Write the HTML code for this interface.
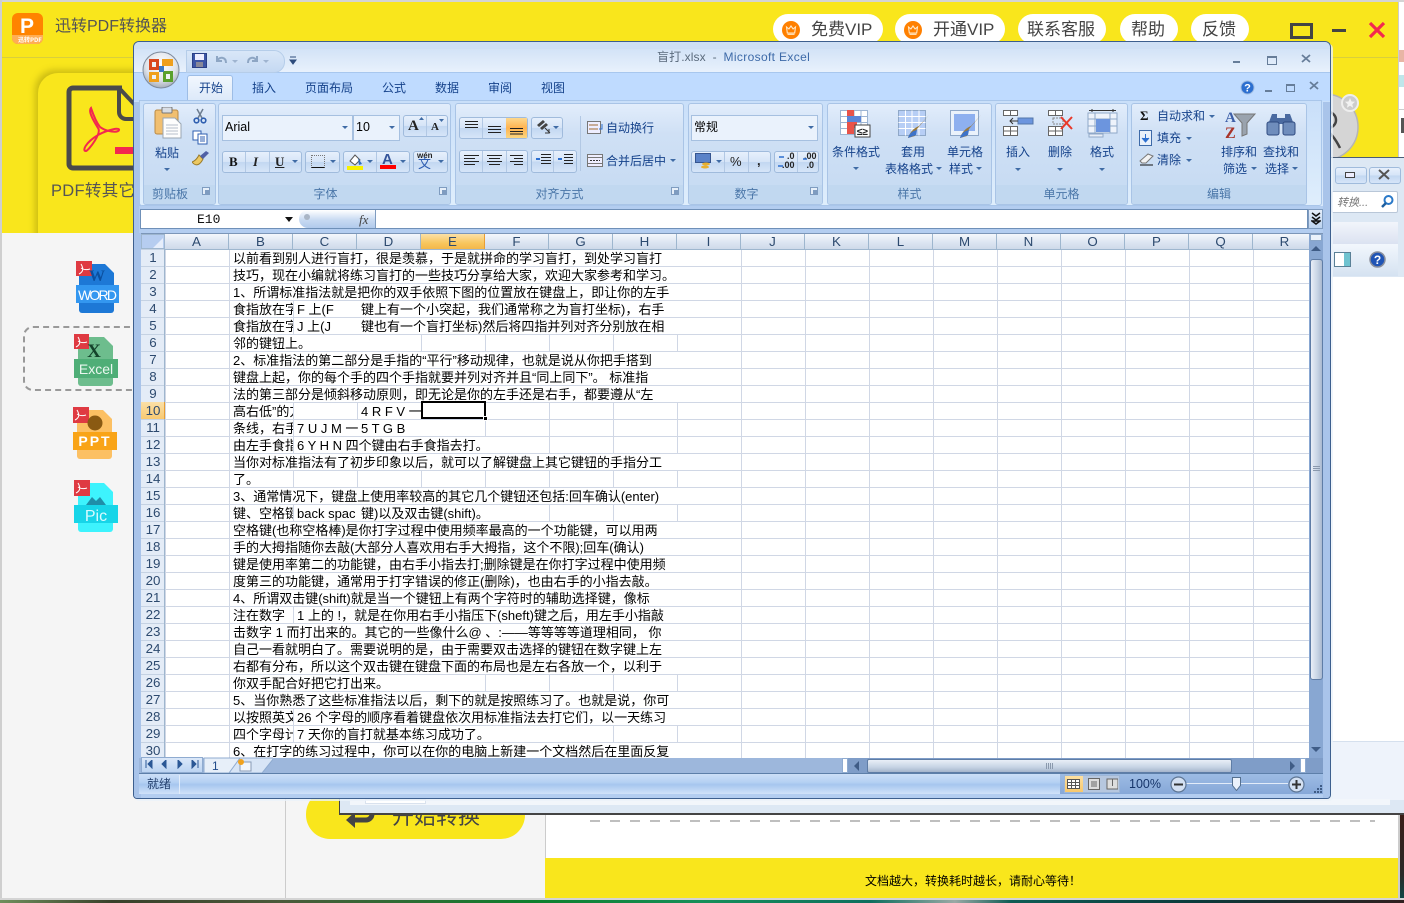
<!DOCTYPE html>
<html lang="zh"><head><meta charset="utf-8"><title>盲打.xlsx - Microsoft Excel</title>
<style>
html,body{margin:0;padding:0;width:1404px;height:903px;overflow:hidden;background:#f5f5f5}
body{position:relative;font-family:"Liberation Sans","WenQuanYi Zen Hei","Noto Sans CJK SC",sans-serif;font-size:12px}
div,svg,span.t{position:absolute}
.t{position:absolute;white-space:nowrap;color:#15428b;font-size:12px;line-height:14px}
.h{font-family:"Liberation Sans","Noto Sans CJK SC",sans-serif;color:#444;font-size:17px;line-height:24px;white-space:nowrap}
.pill{background:#fff;border-radius:15px;top:14px;height:30px}
.g{top:103px;height:100px;border:1px solid #a9c4e6;border-radius:3px;background:linear-gradient(#e2edfb,#cfe0f5 30%,#c5daf2);overflow:hidden}
.f{left:0;right:0;bottom:0;height:19px;background:#c1d8f0;color:#4a76a8;font-size:12px;line-height:19px;text-align:center}
.b{border:1px solid #a0bbdc;border-radius:3px;background:linear-gradient(#e7f0fc,#d5e4f7 50%,#c2d7f1 50%,#d6e5f8)}
.s{width:1px;background:#b2c8e4}
.ar{width:0;height:0;border-left:3px solid transparent;border-right:3px solid transparent;border-top:3px solid #3f6ba5}
.in{background:#eaf2fc;border:1px solid #a6c0e0}
.c{height:16px;background:#fff;overflow:hidden;white-space:nowrap;font-size:13px;line-height:17px;color:#000;padding-left:3px;box-sizing:border-box}
.ch{overflow:hidden}
.ch span{flex:none;width:64px;box-sizing:border-box;border-right:1px solid #9eb6ce}
</style></head><body>

<!-- background application -->
<div style="left:0;top:0;width:1404px;height:2px;background:#d4d4d4"></div>
<div style="left:0;top:0;width:2px;height:903px;background:#cfcfcf"></div>
<div style="left:2px;top:2px;width:1396px;height:231px;background:#f9e61c"></div>
<div style="left:2px;top:57px;width:1396px;height:1px;background:#d9cf3c"></div>
<div style="left:12px;top:13px;width:31px;height:31px;border-radius:6px;background:#ff8400;overflow:hidden">
  <div style="left:0;bottom:0;width:31px;height:9px;background:#ffae55"></div>
  <div style="left:8px;top:3px;font:bold 21px/21px 'Liberation Sans',sans-serif;color:#fff">P</div>
  <div style="left:6px;top:23px;font:bold 6px/7px 'Noto Sans CJK SC',sans-serif;color:#fff;white-space:nowrap">迅转PDF</div>
</div>
<div class="h" style="left:55px;top:15px;font-size:16px;color:#555">迅转PDF转换器</div>

<div class="pill" style="left:773px;width:110px"></div>
<div class="pill" style="left:895px;width:110px"></div>
<div class="pill" style="left:1018px;width:88px"></div>
<div class="pill" style="left:1120px;width:58px"></div>
<div class="pill" style="left:1191px;width:58px"></div>
<svg style="left:782px;top:21px" width="18" height="18" viewBox="0 0 18 18"><circle cx="9" cy="9" r="9" fill="#ff8000"/><path d="M4.500 6l2.400 2L9 5l2.100 3 2.400-2-.8 6H5.300zM5.500 13.300h7" fill="none" stroke="#ffe9c9" stroke-width="1.100"/></svg>
<svg style="left:904px;top:21px" width="18" height="18" viewBox="0 0 18 18"><circle cx="9" cy="9" r="9" fill="#ff8000"/><path d="M4.500 6l2.400 2L9 5l2.100 3 2.400-2-.8 6H5.300zM5.500 13.300h7" fill="none" stroke="#ffe9c9" stroke-width="1.100"/></svg>
<div class="h" style="left:811px;top:18px">免费VIP</div>
<div class="h" style="left:933px;top:18px">开通VIP</div>
<div class="h" style="left:1027px;top:18px">联系客服</div>
<div class="h" style="left:1131px;top:18px">帮助</div>
<div class="h" style="left:1202px;top:18px">反馈</div>
<div style="left:1290px;top:23px;width:17px;height:10px;border:3px solid #444"></div>
<div style="left:1332px;top:29px;width:14px;height:3px;background:#444"></div>
<svg style="left:1368px;top:21px" width="18" height="18" viewBox="0 0 18 18"><path d="M2 2l14 14M16 2L2 16" stroke="#f3284f" stroke-width="3.200"/></svg>

<!-- card -->
<div style="left:38px;top:73px;width:300px;height:190px;border-radius:20px;background:#f9e61c;box-shadow:-3px -3px 7px rgba(120,110,0,.35)"></div>
<div style="left:2px;top:233px;width:340px;height:665px;background:#f5f5f5"></div>
<svg style="left:65px;top:85px" width="70" height="90" viewBox="0 0 70 90">
<path d="M4 7a4 4 0 0 1 4-4h49M4 7v72a4 4 0 0 0 4 4h62" fill="none" stroke="#4a4a4a" stroke-width="5"/>
<path d="M54 3l16 17M54 3v24a7 7 0 0 0 7 7h9" fill="none" stroke="#4a4a4a" stroke-width="4"/>
<path d="M50 62h20v7H50z" fill="#f3284f"/>
<path d="M26 23c-3 3 2 12 7 20 4 5-9 22-12 23-4 0-1-8 12-16 9-5 22-8 21-5-1 3-12 2-19-3-4-5-8-16-9-19z" fill="none" stroke="#f3284f" stroke-width="2"/>
</svg>
<div class="h" style="left:51px;top:179px;font-size:16.500px;color:#555;letter-spacing:.3px">PDF转其它</div>

<!-- format icons -->
<div style="left:23px;top:326px;width:130px;height:61px;border:2px dashed #999;border-radius:10px"></div>
<svg style="left:72px;top:258px" width="50" height="56" viewBox="0 0 50 56">
<path d="M7 6h26l9 9v37a3 3 0 0 1-3 3H10a3 3 0 0 1-3-3z" fill="#1d78d6"/>
<rect x="4" y="27" width="43" height="18" fill="#3397f0"/>
<path d="M4 3h16v15H4z" fill="#df3a42"/><path d="M9 6c3 5 2 8-2 10m2-6c3 2 6 2 9 1" stroke="#fff" fill="none"/>
<text x="25" y="23" font-family="Liberation Serif" font-weight="bold" font-size="16" fill="#0b4f9e" text-anchor="middle">W</text>
<text x="25.500" y="42" font-family="Liberation Sans" font-size="14" fill="#fff" text-anchor="middle" textLength="39">WORD</text></svg>
<svg style="left:70px;top:331px" width="50" height="56" viewBox="0 0 50 56">
<path d="M8 6h26l9 9v37a3 3 0 0 1-3 3H11a3 3 0 0 1-3-3z" fill="#6dbd8d"/>
<rect x="4" y="28" width="44" height="19" fill="#4fae77"/>
<path d="M4 3h15v15H4z" fill="#df3a42"/><path d="M8 6c3 5 2 8-2 10m2-6c3 2 6 2 9 1" stroke="#fff" fill="none"/>
<text x="24" y="26" font-family="Liberation Serif" font-weight="bold" font-size="19" fill="#14432b" text-anchor="middle">X</text>
<text x="26" y="43" font-family="Liberation Sans" font-size="14" fill="#eaf7ef" text-anchor="middle">Excel</text></svg>
<svg style="left:69px;top:404px" width="50" height="56" viewBox="0 0 50 56">
<path d="M8 6h26l9 9v37a3 3 0 0 1-3 3H11a3 3 0 0 1-3-3z" fill="#fcc063"/>
<rect x="4" y="28" width="44" height="18" fill="#f9a417"/>
<path d="M4 3h16v16H4z" fill="#df3a42"/><path d="M8 6c3 5 2 8-2 10m2-6c3 2 6 2 9 1" stroke="#fff" fill="none"/>
<circle cx="26" cy="19" r="7.500" fill="#8a5a12"/>
<text x="26" y="42" font-family="Liberation Sans" font-weight="bold" font-size="14" fill="#fff" text-anchor="middle" letter-spacing="2">PPT</text></svg>
<svg style="left:70px;top:477px" width="50" height="56" viewBox="0 0 50 56">
<path d="M8 6h26l9 9v37a3 3 0 0 1-3 3H11a3 3 0 0 1-3-3z" fill="#3df3fd"/>
<rect x="4" y="28" width="44" height="18" fill="#17d5e8"/>
<path d="M4 3h16v16H4z" fill="#df3a42"/><path d="M8 6c3 5 2 8-2 10m2-6c3 2 6 2 9 1" stroke="#fff" fill="none"/>
<path d="M16 28l6-8 4 4 4-4 6 8z" fill="#1f8ea8"/>
<text x="26" y="44" font-family="Liberation Sans" font-size="16" fill="#d8fbff" text-anchor="middle">Pic</text></svg>

<div style="left:285px;top:233px;width:1px;height:665px;background:#ccc"></div>
<div style="left:545px;top:800px;width:853px;height:98px;background:#fff"></div>
<div style="left:545px;top:233px;width:1px;height:665px;background:#ccc"></div>
<div style="left:545px;top:858px;width:853px;height:40px;background:#f9e61c"></div>
<div class="t" style="left:865px;top:874px;color:#000;font-size:12px">文档越大，转换耗时越长，请耐心等待！</div>
<div style="left:306px;top:790px;width:219px;height:49px;border-radius:24px;background:#f9e61c"></div>
<svg style="left:345px;top:808px" width="32" height="24" viewBox="0 0 32 24"><path d="M27 0v6a6 6 0 0 1-6 6H7" fill="none" stroke="#444" stroke-width="5"/><path d="M10 4L1 12l9 8z" fill="#444"/></svg>
<div class="h" style="left:392px;top:805px;font-size:22px;color:#444">开始转换</div>
<svg style="left:590px;top:814px" width="790" height="12"><path d="M0 7h785" stroke="#aaa" stroke-width="1.500" stroke-dasharray="10 10"/></svg>

<div style="left:1398px;top:815px;width:2px;height:85px;background:#ccc"></div>
<div style="left:1400px;top:815px;width:4px;height:85px;background:linear-gradient(#3a1e18,#2a2a28 70%,#0e4a48)"></div>
<div style="left:0;top:898px;width:1404px;height:2px;background:#d4d4d4"></div>
<div style="left:0;top:900px;width:1404px;height:3px;background:linear-gradient(90deg,#6f8f5c,#38402a 8%,#4b5a3a 20%,#0e7f2d 38%,#168f5a 50%,#0e6f5f 62%,#9aa9a5 68%,#0e5d55 72%,#0b3b3c 85%,#302020)"></div>

<!-- right side -->
<div style="left:1398px;top:2px;width:6px;height:155px;background:#fff"></div>
<div style="left:1398px;top:2px;width:1px;height:155px;background:#ccc"></div>
<div style="left:1399px;top:57px;width:5px;height:1px;background:#ccc"></div>
<div style="left:1399px;top:50px;width:5px;height:12px;background:#e8b5a5"></div>
<div style="left:1399px;top:75px;width:5px;height:12px;background:#bfe6ea"></div>
<div style="left:1399px;top:109px;width:5px;height:1px;background:#ccc"></div>
<div style="left:1401px;top:118px;width:3px;height:15px;background:#555"></div>
<svg style="left:1300px;top:90px" width="65" height="70" viewBox="0 0 65 70"><circle cx="25" cy="37" r="33" fill="#d5d5d5" stroke="#b5b5b5" stroke-width="1.500"/><circle cx="50" cy="13" r="8" fill="#ccc" stroke="#eee" stroke-width="2"/><path d="M50 8l1.500 3.500 3.500.3-2.700 2.400.8 3.600-3.100-2-3.100 2 .8-3.600L45 11.800l3.500-.3z" fill="#f2f2f2"/><path d="M24 38c6 4 12 12 16 20" fill="none" stroke="#444" stroke-width="2.500"/><circle cx="28" cy="30" r="8" fill="none" stroke="#444" stroke-width="2.500"/></svg>

<!-- second window behind -->
<div style="left:339px;top:157px;width:1065px;height:658px;background:#dde8f4;border-left:1px solid #444;border-top:1px solid #4a5d75;border-bottom:2px solid #444;box-sizing:border-box"></div>
<div style="left:1335px;top:167px;width:30px;height:15px" class="b"></div>
<div style="left:1369px;top:167px;width:30px;height:15px" class="b"></div>
<div style="left:1345px;top:172px;width:8px;height:4px;border:1px solid #444;background:#eef"></div>
<svg style="left:1377px;top:169px" width="15" height="11"><path d="M2 1l10 9M12 1L2 10" stroke="#555" stroke-width="2"/></svg>
<div style="left:1331px;top:191px;width:67px;height:22px;background:#fff;border:1px solid #b9c7d8;box-sizing:border-box;border-radius:2px"></div>
<div class="t" style="left:1337px;top:196px;color:#777;font-style:italic;font-size:11px">转换...</div>
<svg style="left:1379px;top:194px" width="16" height="16"><circle cx="9.500" cy="6" r="4" fill="none" stroke="#2a79c8" stroke-width="2"/><path d="M7 9l-4 4" stroke="#1f5f9f" stroke-width="2.500"/></svg>
<div style="left:1331px;top:222px;width:67px;height:22px;background:linear-gradient(#f2f5fb,#dbe2f1)"></div>
<div style="left:1331px;top:244px;width:67px;height:32px;background:linear-gradient(#f2f7fd,#d5e2f1)"></div>
<div style="left:1334px;top:252px;width:15px;height:13px;border:1px solid #5a8096;background:linear-gradient(90deg,#fff 60%,#6fc3d0 60%)"></div>
<svg style="left:1369px;top:251px" width="17" height="17"><circle cx="8.500" cy="8.500" r="7.500" fill="#1f54b5" stroke="#8a8f9c" stroke-width="1.500"/><text x="8.500" y="13" font-family="Liberation Sans" font-weight="bold" font-size="12" fill="#fff" text-anchor="middle">?</text></svg>
<div style="left:1331px;top:277px;width:67px;height:464px;background:#fff"></div>
<div style="left:1398px;top:277px;width:6px;height:464px;background:#fff"></div>
<div style="left:1331px;top:741px;width:73px;height:1px;background:#d5e0ee"></div>
<div style="left:1331px;top:742px;width:73px;height:58px;background:#eef3fb"></div>
<div style="left:350px;top:799px;width:1040px;height:6px;background:#f2f6fb"></div>
<div style="left:365px;top:799px;width:59px;height:3px;background:#fff;border:1px solid #d9e2ee"></div>

<!-- Excel window -->
<div style="left:133px;top:41px;width:1198px;height:758px;box-sizing:border-box;border:1px solid #3d5f8e;border-radius:6px 6px 4px 4px;background:#b3cdf0;box-shadow:2px 2px 0 rgba(235,242,250,.8);overflow:hidden">
 <div style="left:0;top:0;width:1196px;height:7px;background:#cfe0f5"></div>
 <div style="left:0;top:7px;width:1196px;height:23px;background:linear-gradient(#d3e3f7,#e8f1fc)"></div>
 <div style="left:0;top:30px;width:1196px;height:1px;background:#a8c7ee"></div>
 <div style="left:0;top:31px;width:1196px;height:28px;background:#bfdbff"></div>
 <div style="left:0;top:59px;width:1196px;height:108px;background:linear-gradient(#c8dffa,#d9e8fa)"></div>
 <div style="left:1189px;top:60px;width:7px;height:700px;background:#a9c4ea"></div>
 <div style="left:0;top:60px;width:7px;height:700px;background:#a9c4ea"></div>
</div>
<!-- office button and QAT -->
<div style="left:186px;top:50px;width:97px;height:21px;border:1px solid #b5cde9;border-radius:0 11px 11px 0;background:linear-gradient(#d9e7f8,#c5d9f2)"></div>
<svg style="left:142px;top:51px" width="38" height="38" viewBox="0 0 38 38">
<defs><radialGradient id="o" cx=".5" cy=".35" r=".7"><stop offset="0" stop-color="#fff"/><stop offset=".6" stop-color="#dfe3ea"/><stop offset="1" stop-color="#9aa3b0"/></radialGradient></defs>
<circle cx="19" cy="19" r="18" fill="url(#o)" stroke="#7d8a9c"/>
<path d="M7 8h10v11H7z" fill="#d9481f"/><path d="M20 8h11v7H20z" fill="#ef9f1c"/><path d="M7 21h10v10H7z" fill="#efa01c"/><path d="M21 20h10v11H21z" fill="#5aa02c"/><path d="M17 15h5v6h-5z" fill="#3b78c4"/><path d="M10 11h4v5h-4zM10 24h4v4h-4zM24 23h4v5h-4z" fill="#eef2f6"/>
</svg>
<svg style="left:192px;top:53px" width="15" height="15"><rect x=".5" y=".5" width="14" height="14" fill="#3c55a5" stroke="#2b3f86"/><rect x="3" y="1" width="9" height="6" fill="#eef"/><rect x="4" y="9" width="7" height="5" fill="#889"/></svg>
<svg style="left:214px;top:54px" width="40" height="13"><path d="M3 2v5h5M3 7c3-5 9-4 9 2" fill="none" stroke="#8ea6c4" stroke-width="2"/><path d="M18 6l3 3 3-3z" fill="#9fb4d0"/></svg>
<svg style="left:246px;top:54px" width="30" height="13"><path d="M11 2v5H6M11 7C8 2 2 3 2 9" fill="none" stroke="#8ea6c4" stroke-width="2"/><path d="M17 6l3 3 3-3z" fill="#9fb4d0"/></svg>
<svg style="left:289px;top:56px" width="8" height="9"><path d="M1 1h6M1 4h6l-3 4z" fill="#2e4c7c" stroke="#2e4c7c"/></svg>
<div class="t" style="left:657px;top:50px;color:#5a6a7c;letter-spacing:.1px">盲打.xlsx&nbsp;&nbsp;-&nbsp;&nbsp;<span style="color:#3d6aa8;letter-spacing:.35px">Microsoft Excel</span></div>
<div style="left:1233px;top:61px;width:7px;height:2px;background:#667d99"></div>
<div style="left:1267px;top:56px;width:8px;height:6px;border:1px solid #667d99;border-top-width:2px"></div>
<svg style="left:1301px;top:54px" width="10" height="10"><path d="M1 1l8 7M9 1L1 8" stroke="#667d99" stroke-width="1.800"/></svg>

<!-- tabs -->
<div style="left:187px;top:75px;width:46px;height:26px;box-sizing:border-box;border:1px solid #9dbde6;border-bottom:0;border-radius:3px 3px 0 0;background:linear-gradient(#f2f7fe,#dce9f9)"></div>
<div class="t" style="left:199px;top:81px">开始</div>
<div class="t" style="left:252px;top:81px">插入</div>
<div class="t" style="left:305px;top:81px">页面布局</div>
<div class="t" style="left:382px;top:81px">公式</div>
<div class="t" style="left:435px;top:81px">数据</div>
<div class="t" style="left:488px;top:81px">审阅</div>
<div class="t" style="left:541px;top:81px">视图</div>
<svg style="left:1240px;top:80px" width="15" height="15"><circle cx="7.500" cy="7.500" r="6.500" fill="#2c6fd0" stroke="#9fbbe0"/><text x="7.500" y="11.500" font-family="Liberation Sans" font-weight="bold" font-size="11" fill="#fff" text-anchor="middle">?</text></svg>
<div style="left:1265px;top:90px;width:7px;height:2px;background:#667d99"></div>
<div style="left:1286px;top:84px;width:7px;height:5px;border:1px solid #667d99;border-top-width:2px"></div>
<svg style="left:1309px;top:81px" width="10" height="10"><path d="M1 1l8 7M9 1L1 8" stroke="#667d99" stroke-width="1.800"/></svg>

<!-- ribbon -->
<div style="left:139px;top:100px;width:1183px;height:106px;background:linear-gradient(#c9dff9,#dfeefc);border:1px solid #a9c6ea;border-radius:0 0 3px 3px;box-sizing:border-box"></div>

<div class="g" style="left:143px;width:71px"><div class="f" style="text-align:left;padding-left:8px">剪贴板</div></div>
<div class="g" style="left:218px;width:231px"><div class="f" style="padding-right:18px">字体</div></div>
<div class="g" style="left:455px;width:227px"><div class="f" style="padding-right:20px">对齐方式</div></div>
<div class="g" style="left:688px;width:133px"><div class="f" style="padding-right:18px">数字</div></div>
<div class="g" style="left:827px;width:163px"><div class="f">样式</div></div>
<div class="g" style="left:995px;width:131px"><div class="f">单元格</div></div>
<div class="g" style="left:1131px;width:174px"><div class="f">编辑</div></div>

<svg style="left:202px;top:187px" width="9" height="9"><rect x=".5" y=".5" width="7" height="7" fill="#e6eff9" stroke="#7f9cc0"/><rect x="3" y="3" width="4" height="4" fill="#7f9cc0"/></svg>
<svg style="left:439px;top:187px" width="9" height="9"><rect x=".5" y=".5" width="7" height="7" fill="#e6eff9" stroke="#7f9cc0"/><rect x="3" y="3" width="4" height="4" fill="#7f9cc0"/></svg>
<svg style="left:671px;top:187px" width="9" height="9"><rect x=".5" y=".5" width="7" height="7" fill="#e6eff9" stroke="#7f9cc0"/><rect x="3" y="3" width="4" height="4" fill="#7f9cc0"/></svg>
<svg style="left:810px;top:187px" width="9" height="9"><rect x=".5" y=".5" width="7" height="7" fill="#e6eff9" stroke="#7f9cc0"/><rect x="3" y="3" width="4" height="4" fill="#7f9cc0"/></svg>

<!-- clipboard -->
<svg style="left:154px;top:107px" width="30" height="32" viewBox="0 0 30 32"><rect x="1" y="3" width="23" height="24" rx="2" fill="#f1bf70" stroke="#b98a45"/><rect x="8" y="0" width="10" height="6" rx="1" fill="#d8dde4" stroke="#777"/><path d="M9 11h12l6 6v14H9z" fill="#fdfdfd" stroke="#9aa6b2"/><path d="M12 18h12M12 21h12M12 24h12M12 27h12" stroke="#b6bfca"/></svg>
<div class="t" style="left:155px;top:146px">粘贴</div><div class="ar" style="left:164px;top:168px"></div>
<svg style="left:193px;top:108px" width="14" height="16"><path d="M4 1l5 9M10 1L5 10" stroke="#6d7d90" stroke-width="1.500"/><circle cx="3.500" cy="12.500" r="2.300" fill="none" stroke="#2f5fb0" stroke-width="1.600"/><circle cx="10.500" cy="12.500" r="2.300" fill="none" stroke="#2f5fb0" stroke-width="1.600"/></svg>
<svg style="left:192px;top:130px" width="16" height="15"><rect x="1" y="1" width="8" height="9" fill="#fff" stroke="#2f5fb0"/><rect x="6" y="4" width="9" height="10" fill="#fff" stroke="#2f5fb0"/><path d="M8 7h5M8 9h5M8 11h5" stroke="#2f5fb0"/></svg>
<svg style="left:192px;top:151px" width="17" height="16"><path d="M0 11c4 5 8 3 11-3L7 4C5 8 3 10 0 11z" fill="#ecc862" stroke="#997a2a"/><path d="M8 5l6-5 3 2-6 6z" fill="#5060a5"/></svg>

<!-- font -->
<div class="in" style="left:222px;top:115px;width:129px;height:24px"></div>
<div class="in" style="left:353px;top:115px;width:45px;height:24px"></div>
<div class="t" style="left:225px;top:120px;color:#000;font-size:12.500px">Arial</div>
<div class="t" style="left:356px;top:120px;color:#000;font-size:12.500px">10</div>
<div class="ar" style="left:342px;top:126px"></div><div class="ar" style="left:389px;top:126px"></div>
<div class="b" style="left:403px;top:115px;width:43px;height:20px"></div><div class="s" style="left:426px;top:116px;height:20px"></div>
<div class="t" style="left:408px;top:118px;font:bold 15px/16px 'Liberation Serif',serif;color:#222">A</div>
<div class="t" style="left:431px;top:121px;font:bold 11px/13px 'Liberation Serif',serif;color:#222">A</div>
<svg style="left:418px;top:116px" width="8" height="5"><path d="M1 4l2.500-3L6 4z" fill="#3f6ba5"/></svg>
<svg style="left:438px;top:118px" width="8" height="5"><path d="M1 1l2.500 3L6 1z" fill="#3f6ba5"/></svg>
<div class="b" style="left:222px;top:151px;width:78px;height:20px"></div>
<div class="s" style="left:245px;top:152px;height:20px"></div><div class="s" style="left:269px;top:152px;height:20px"></div>
<div class="t" style="left:229px;top:155px;font:bold 13px/14px 'Liberation Serif',serif;color:#111">B</div>
<div class="t" style="left:253px;top:155px;font:italic bold 13px/14px 'Liberation Serif',serif;color:#222">I</div>
<div class="t" style="left:275px;top:155px;font:bold 13px/14px 'Liberation Serif',serif;color:#222;text-decoration:underline">U</div>
<div class="ar" style="left:292px;top:160px"></div>
<div class="b" style="left:305px;top:151px;width:33px;height:20px"></div>
<div style="left:311px;top:155px;width:12px;height:11px;border:1px dotted #777;border-bottom:1px solid #111"></div>
<div class="ar" style="left:330px;top:160px"></div>
<div class="b" style="left:343px;top:151px;width:65px;height:20px"></div><div class="s" style="left:376px;top:152px;height:20px"></div>
<svg style="left:347px;top:152px" width="16" height="19"><path d="M3 9l5-6 5 5-5 5z" fill="#fff" stroke="#555"/><path d="M11 6l4 6-3 1z" fill="#2d6fc0"/><rect y="14" x="0" width="16" height="4" fill="#f7f100"/></svg>
<div class="ar" style="left:367px;top:160px"></div>
<div class="t" style="left:382px;top:152px;font:bold 15px/16px 'Liberation Sans',sans-serif;color:#34549a">A</div><div style="left:380px;top:165px;width:16px;height:4px;background:#f00"></div>
<div class="ar" style="left:400px;top:160px"></div>
<div class="b" style="left:413px;top:151px;width:33px;height:20px"></div>
<div class="t" style="left:417px;top:151px;font-size:8px;line-height:9px;color:#222;font-weight:bold">wén</div><div class="t" style="left:418px;top:157px;font-size:13px;line-height:14px;color:#2b5bb0">文</div>
<div class="ar" style="left:438px;top:160px"></div>

<!-- alignment -->
<div class="b" style="left:459px;top:117px;width:67px;height:20px"></div>
<div class="s" style="left:482px;top:118px;height:20px"></div>
<div style="left:506px;top:118px;width:21px;height:20px;background:linear-gradient(#fdd88d,#ffb350 50%,#fcd67f)"></div>
<svg style="left:463px;top:120px" width="60" height="15"><path d="M2 1.500h13M2 4.500h13M2 7.500h13M25 6.500h13M25 9.500h13M25 12.500h13M47 8.500h13M47 11.500h13M47 14h13" stroke="#222"/></svg>
<div class="b" style="left:531px;top:117px;width:30px;height:20px"></div>
<svg style="left:535px;top:119px" width="18" height="16"><path d="M2 6l6-5 2 2-6 5zM5 9l6-5 2 2-6 5z" fill="#444"/><path d="M10 9l5 5M14 10v4h-4" stroke="#333" fill="none"/></svg>
<div class="ar" style="left:553px;top:126px"></div>
<div class="b" style="left:459px;top:150px;width:67px;height:21px"></div>
<div class="s" style="left:482px;top:151px;height:21px"></div><div class="s" style="left:506px;top:151px;height:21px"></div>
<svg style="left:463px;top:154px" width="60" height="14"><path d="M1 1.500h15M1 4.500h11M1 7.500h15M1 10.500h11M24 1.500h15M26 4.500h11M24 7.500h15M26 10.500h11M47 1.500h15M51 4.500h11M47 7.500h15M51 10.500h11" stroke="#222"/></svg>
<div class="b" style="left:531px;top:150px;width:44px;height:21px"></div><div class="s" style="left:553px;top:151px;height:21px"></div>
<svg style="left:535px;top:153px" width="38" height="15"><path d="M6 1.500h10M6 4.500h10M6 7.500h10M6 10.500h10M29 1.500h9M29 4.500h9M29 7.500h9M29 10.500h9" stroke="#222"/><path d="M5 6L1 6M23 6h4" stroke="#2c6fd0" stroke-width="2"/></svg>
<div class="s" style="left:580px;top:116px;height:55px"></div>
<svg style="left:587px;top:120px" width="17" height="15"><rect x=".5" y="1.500" width="13" height="12" fill="#eef" stroke="#777"/><path d="M2 5h9M2 9h9" stroke="#a06a30"/><path d="M15 4v5h-3" stroke="#2c6fd0" fill="none"/></svg>
<svg style="left:587px;top:153px" width="17" height="15"><rect x=".5" y="1.500" width="15" height="12" fill="#eef" stroke="#777"/><path d="M1 4.500h14M1 10.500h14" stroke="#777"/><path d="M3 7.500h10" stroke="#333" stroke-dasharray="2 1"/></svg>
<div class="t" style="left:606px;top:121px">自动换行</div>
<div class="t" style="left:606px;top:154px">合并后居中</div>
<div class="ar" style="left:670px;top:159px"></div>

<!-- number -->
<div class="in" style="left:691px;top:115px;width:125px;height:24px"></div>
<div class="t" style="left:694px;top:120px;color:#000">常规</div><div class="ar" style="left:808px;top:126px"></div>
<div class="b" style="left:691px;top:151px;width:78px;height:20px"></div>
<div class="s" style="left:724px;top:152px;height:20px"></div><div class="s" style="left:748px;top:152px;height:20px"></div>
<svg style="left:695px;top:153px" width="17" height="17"><rect x=".5" y=".5" width="15" height="9" fill="#5a82c8" stroke="#36558f"/><ellipse cx="11" cy="11" rx="4" ry="1.500" fill="#e8b030"/><ellipse cx="10" cy="14" rx="4" ry="1.500" fill="#e8b030"/></svg>
<div class="ar" style="left:716px;top:160px"></div>
<div class="t" style="left:730px;top:155px;font-size:13px;color:#222">%</div>
<div class="t" style="left:757px;top:154px;font-size:13px;color:#222;font-weight:bold">,</div>
<div class="b" style="left:774px;top:151px;width:43px;height:20px"></div><div class="s" style="left:797px;top:152px;height:20px"></div>
<div class="t" style="left:782px;top:152px;font-size:9px;line-height:9px;color:#222;font-weight:bold;text-align:right">.0<br>.00</div>
<div class="t" style="left:804px;top:152px;font-size:9px;line-height:9px;color:#222;font-weight:bold">.00<br>&nbsp;.0</div>
<svg style="left:776px;top:153px" width="40" height="16"><path d="M8 4H3M7 13h-5M31 6h-4" stroke="#2c6fd0" stroke-width="1.500"/></svg>

<!-- styles -->
<svg style="left:840px;top:110px" width="31" height="28" viewBox="0 0 31 28"><path d="M.5.500h27v24H.500zM.5 6.500h27M.5 12.500h27M.5 18.500h27M7.500.500v24M14 .500v24M21 .500v24" fill="#fff" stroke="#9db5d3"/><path d="M7 0h7v6H7zM7 18h7v6H7z" fill="#e8534a"/><path d="M7 6h14v6H7z" fill="#5a85d8"/><path d="M7 12h10v6H7z" fill="#e8534a"/><rect x="15" y="15" width="15" height="12" fill="#fff" stroke="#444"/><text x="22.500" y="25" font-family="Liberation Sans" font-size="10" font-weight="bold" fill="#222" text-anchor="middle">≤≥</text></svg>
<svg style="left:898px;top:110px" width="32" height="29" viewBox="0 0 32 29"><path d="M.5.500h27v25H.500z" fill="#b7cef5" stroke="#8fa8c8"/><path d="M.5 6.500h27M.5 12.500h27M.5 18.500h27M7.500.500v25M14 .500v25M21 .500v25" stroke="#fff"/><path d="M31 5L19 19l-2 7-7 2c2-6 6-10 11-12z" fill="#9a7a3c"/><path d="M10 28c1-4 4-7 9-8l-1 5z" fill="#3d73c9"/></svg>
<svg style="left:950px;top:110px" width="32" height="29" viewBox="0 0 32 29"><rect x=".5" y=".5" width="28" height="25" fill="#eaf2fb" stroke="#8fa8c8"/><rect x="4" y="4" width="21" height="17" fill="#8eb0ef"/><path d="M31 5L19 19l-2 7-7 2c2-6 6-10 11-12z" fill="#9a7a3c"/><path d="M10 28c1-4 4-7 9-8l-1 5z" fill="#3d73c9"/></svg>
<div class="t" style="left:832px;top:145px">条件格式</div><div class="ar" style="left:853px;top:167px"></div>
<div class="t" style="left:901px;top:145px">套用</div>
<div class="t" style="left:885px;top:162px">表格格式</div><div class="ar" style="left:936px;top:167px"></div>
<div class="t" style="left:947px;top:145px">单元格</div>
<div class="t" style="left:949px;top:162px">样式</div><div class="ar" style="left:976px;top:167px"></div>

<!-- cells -->
<svg style="left:1003px;top:110px" width="31" height="27" viewBox="0 0 31 27"><path d="M.5.500h14v5H.500zM.5 5.500h14M7.500.500v5M.5 16.500h14v9H.500zM.5 21h14M7.500 16.500v9" fill="#fff" stroke="#666"/><rect x="15" y="8" width="15" height="6" fill="#6c95de" stroke="#5577aa"/><path d="M7 11h8M10 8l-3 3 3 3" stroke="#333" fill="none"/></svg>
<svg style="left:1048px;top:110px" width="26" height="27" viewBox="0 0 26 27"><path d="M.5.500h14v5H.500zM.5 16.500h14v9H.500zM.5 21h14M7.500 16.500v9M7.500.500v5" fill="#fff" stroke="#666"/><rect x="5" y="8" width="10" height="6" fill="none" stroke="#888" stroke-dasharray="2 1"/><path d="M13 7l11 12M24 7L13 19" stroke="#e8392a" stroke-width="2"/></svg>
<svg style="left:1087px;top:109px" width="31" height="30" viewBox="0 0 31 30"><path d="M2 1.500h27M5 0v3M26 0v3" stroke="#333"/><rect x="1" y="4" width="29" height="20" fill="#eef3fb" stroke="#8fa8c8"/><path d="M8 4v20M23 4v20M1 10h29M1 17h29" stroke="#8fa8c8"/><rect x="9" y="10" width="14" height="13" fill="#6c95de"/><path d="M2 25h14v3H2z" fill="#e8eef7" stroke="#8fa8c8"/></svg>
<div class="t" style="left:1006px;top:145px">插入</div><div class="ar" style="left:1015px;top:168px"></div>
<div class="t" style="left:1048px;top:145px">删除</div><div class="ar" style="left:1057px;top:168px"></div>
<div class="t" style="left:1090px;top:145px">格式</div><div class="ar" style="left:1099px;top:168px"></div>

<!-- edit -->
<div class="t" style="left:1140px;top:108px;font:bold 13px/15px 'Liberation Serif',serif;color:#111">Σ</div>
<div class="t" style="left:1157px;top:109px">自动求和</div><div class="ar" style="left:1209px;top:115px"></div>
<svg style="left:1139px;top:130px" width="14" height="16"><rect x=".5" y=".5" width="12" height="15" fill="#e8f0fa" stroke="#3d6aa8"/><path d="M6.500 4v6M3 8l3.500 4L10 8" fill="#2c6fd0" stroke="#2c6fd0"/></svg>
<div class="t" style="left:1157px;top:131px">填充</div><div class="ar" style="left:1186px;top:137px"></div>
<svg style="left:1139px;top:153px" width="15" height="13"><path d="M1 8l8-7 5 2-7 7H3z" fill="#f3f3f3" stroke="#777"/><path d="M1 12h13" stroke="#111"/></svg>
<div class="t" style="left:1157px;top:153px">清除</div><div class="ar" style="left:1186px;top:159px"></div>
<svg style="left:1224px;top:108px" width="32" height="31" viewBox="0 0 32 31"><text x="1" y="14" font-family="Liberation Serif" font-weight="bold" font-size="15" fill="#3d5fa8">A</text><text x="1" y="30" font-family="Liberation Serif" font-weight="bold" font-size="16" fill="#a8342a">Z</text><path d="M10 6h21l-8 9v11l-5 2V15z" fill="#9aa3ae" stroke="#777"/></svg>
<svg style="left:1266px;top:110px" width="30" height="27" viewBox="0 0 30 27"><path d="M3 12l3-8h5v8zM19 4h5l3 8h-8zM11 8h8v6h-8z" fill="#4a6aa0"/><rect x="1" y="12" width="12" height="13" rx="2" fill="#6f8dbc" stroke="#2f4a80"/><rect x="17" y="12" width="12" height="13" rx="2" fill="#6f8dbc" stroke="#2f4a80"/></svg>
<div class="t" style="left:1221px;top:145px">排序和</div>
<div class="t" style="left:1223px;top:162px">筛选</div><div class="ar" style="left:1251px;top:167px"></div>
<div class="t" style="left:1263px;top:145px">查找和</div>
<div class="t" style="left:1265px;top:162px">选择</div><div class="ar" style="left:1292px;top:167px"></div>

<!-- formula bar -->
<div style="left:139px;top:206px;width:1184px;height:27px;background:#b3cdf0"></div>
<div style="left:140px;top:209px;width:1168px;height:20px;background:#fff;border:1px solid #6f90b8;box-sizing:border-box"></div>
<div class="t" style="left:197px;top:213px;font:13px/14px 'Liberation Mono',monospace;color:#111">E10</div>
<svg style="left:285px;top:217px" width="9" height="5"><path d="M0 0h8L4 5z" fill="#111"/></svg>
<div style="left:299px;top:210px;width:76px;height:18px;border-radius:9px 0 0 9px;background:linear-gradient(#fff,#c8daf2 55%,#b1caec);border-right:1px solid #7f9cc0"></div>
<div style="left:304px;top:214px;width:6px;height:6px;border-radius:3px;background:#aab6c6"></div>
<div class="t" style="left:359px;top:212px;font:italic 13px/15px 'Liberation Serif',serif;color:#444">fx</div>
<div style="left:1308px;top:209px;width:15px;height:20px;box-sizing:border-box;border:1px solid #7f9cc0;background:linear-gradient(#e5eefb,#bcd3ef)"></div>
<svg style="left:1311px;top:212px" width="10" height="14"><path d="M1 1l4 3 4-3M1 5l4 3 4-3M1 9h8L5 12z" fill="none" stroke="#111" stroke-width="1.500"/></svg>

<!-- grid -->
<div style="left:141px;top:233px;width:1182px;height:1px;background:#7c96b8"></div>
<div style="left:165px;top:249px;width:1144px;height:509px;background-color:#fff;background-image:linear-gradient(to right,#d0d7e5 1px,transparent 1px),linear-gradient(to bottom,#d0d7e5 1px,transparent 1px);background-size:64px 17px"></div>
<div style="left:141px;top:234px;width:24px;height:15px;background:#b6cdf0;border:1px solid #9eb6ce;box-sizing:border-box"></div>
<svg style="left:153px;top:238px" width="10" height="10"><path d="M10 0v10H0z" fill="#e6eefb"/></svg>
<div class="ch" style="left:165px;top:234px;width:1144px;height:15px;display:flex;background:linear-gradient(#f4f7fc,#dbe4f1 60%,#ced9e9);color:#2d4a6f;font-size:13.330px;line-height:15px;text-align:center;border-bottom:1px solid #9eb6ce">
<span>A</span><span>B</span><span>C</span><span>D</span><span style="border-right:1px solid #e99e33;background:linear-gradient(#fbe0a7,#f8c65e 60%,#f3b74a)">E</span><span>F</span><span>G</span><span>H</span><span>I</span><span>J</span><span>K</span><span>L</span><span>M</span><span>N</span><span>O</span><span>P</span><span>Q</span><span>R</span></div>
<div style="left:141px;top:249px;width:24px;height:509px;overflow:hidden;background-color:#e4ecf7;background-image:linear-gradient(to bottom,#c5d2e3 1px,transparent 1px);background-size:24px 17px;border-right:1px solid #9eb6ce;box-sizing:border-box;color:#2d4a6f;font-size:13.330px;line-height:17px;text-align:center;padding-left:1px">1<br>2<br>3<br>4<br>5<br>6<br>7<br>8<br>9<br>10<br>11<br>12<br>13<br>14<br>15<br>16<br>17<br>18<br>19<br>20<br>21<br>22<br>23<br>24<br>25<br>26<br>27<br>28<br>29<br>30</div>
<div style="left:141px;top:402px;width:24px;height:17px;background:linear-gradient(#fbe0a7,#f8c971);color:#2d4a6f;font-size:13.330px;line-height:17px;text-align:center;padding-left:1px;box-sizing:border-box;border-right:1px solid #e99e33">10</div>

<!-- cells -->
<div class="c" style="left:230px;top:250px;width:448px">以前看到别人进行盲打，很是羡慕，于是就拼命的学习盲打，到处学习盲打</div>
<div class="c" style="left:230px;top:267px;width:448px">技巧，现在小编就将练习盲打的一些技巧分享给大家，欢迎大家参考和学习。</div>
<div class="c" style="left:230px;top:284px;width:448px">1、所谓标准指法就是把你的双手依照下图的位置放在键盘上，即让你的左手</div>
<div class="c" style="left:230px;top:301px;width:63px">食指放在字母</div><div class="c" style="left:294px;top:301px;width:64px">F 上(F</div><div class="c" style="left:358px;top:301px;width:320px">键上有一个小突起，我们通常称之为盲打坐标)，右手</div>
<div class="c" style="left:230px;top:318px;width:63px">食指放在字母</div><div class="c" style="left:294px;top:318px;width:64px">J 上(J</div><div class="c" style="left:358px;top:318px;width:320px">键也有一个盲打坐标)然后将四指并列对齐分别放在相</div>
<div class="c" style="left:230px;top:335px;width:128px">邻的键钮上。</div>
<div class="c" style="left:230px;top:352px;width:448px">2、标准指法的第二部分是手指的“平行”移动规律，也就是说从你把手搭到</div>
<div class="c" style="left:230px;top:369px;width:448px">键盘上起，你的每个手的四个手指就要并列对齐并且“同上同下”。 标准指</div>
<div class="c" style="left:230px;top:386px;width:448px">法的第三部分是倾斜移动原则，即无论是你的左手还是右手，都要遵从“左</div>
<div class="c" style="left:230px;top:403px;width:63px">高右低”的方</div><div class="c" style="left:358px;top:403px;width:64px">4 R F V 一</div>
<div class="c" style="left:230px;top:420px;width:63px">条线，右手</div><div class="c" style="left:294px;top:420px;width:64px">7 U J M 一</div><div class="c" style="left:358px;top:420px;width:64px">5 T G B</div>
<div class="c" style="left:230px;top:437px;width:63px">由左手食指</div><div class="c" style="left:294px;top:437px;width:200px">6 Y H N 四个键由右手食指去打。</div>
<div class="c" style="left:230px;top:454px;width:448px">当你对标准指法有了初步印象以后，就可以了解键盘上其它键钮的手指分工</div>
<div class="c" style="left:230px;top:471px;width:63px">了。</div>
<div class="c" style="left:230px;top:488px;width:448px">3、通常情况下，键盘上使用率较高的其它几个键钮还包括:回车确认(enter)</div>
<div class="c" style="left:230px;top:505px;width:63px">键、空格键</div><div class="c" style="left:294px;top:505px;width:64px">back spac</div><div class="c" style="left:358px;top:505px;width:128px">键)以及双击键(shift)。</div>
<div class="c" style="left:230px;top:522px;width:448px">空格键(也称空格棒)是你打字过程中使用频率最高的一个功能键，可以用两</div>
<div class="c" style="left:230px;top:539px;width:448px">手的大拇指随你去敲(大部分人喜欢用右手大拇指，这个不限);回车(确认)</div>
<div class="c" style="left:230px;top:556px;width:448px">键是使用率第二的功能键，由右手小指去打;删除键是在你打字过程中使用频</div>
<div class="c" style="left:230px;top:573px;width:448px">度第三的功能键，通常用于打字错误的修正(删除)，也由右手的小指去敲。</div>
<div class="c" style="left:230px;top:590px;width:448px">4、所谓双击键(shift)就是当一个键钮上有两个字符时的辅助选择键，像标</div>
<div class="c" style="left:230px;top:607px;width:63px">注在数字</div><div class="c" style="left:294px;top:607px;width:384px">1 上的 !，就是在你用右手小指压下(sheft)键之后，用左手小指敲</div>
<div class="c" style="left:230px;top:624px;width:448px">击数字 1 而打出来的。其它的一些像什么@ 、:——等等等等道理相同， 你</div>
<div class="c" style="left:230px;top:641px;width:448px">自己一看就明白了。需要说明的是，由于需要双击选择的键钮在数字键上左</div>
<div class="c" style="left:230px;top:658px;width:448px">右都有分布，所以这个双击键在键盘下面的布局也是左右各放一个，以利于</div>
<div class="c" style="left:230px;top:675px;width:192px">你双手配合好把它打出来。</div>
<div class="c" style="left:230px;top:692px;width:448px">5、当你熟悉了这些标准指法以后，剩下的就是按照练习了。也就是说，你可</div>
<div class="c" style="left:230px;top:709px;width:63px">以按照英文</div><div class="c" style="left:294px;top:709px;width:384px">26 个字母的顺序看着键盘依次用标准指法去打它们，以一天练习</div>
<div class="c" style="left:230px;top:726px;width:63px">四个字母计</div><div class="c" style="left:294px;top:726px;width:256px">7 天你的盲打就基本练习成功了。</div>
<div class="c" style="left:230px;top:743px;width:448px">6、在打字的练习过程中，你可以在你的电脑上新建一个文档然后在里面反复</div>
<div style="left:421px;top:401px;width:65px;height:18px;box-sizing:border-box;border:2px solid #000"></div>
<div style="left:483px;top:416px;width:5px;height:5px;background:#000;border:1px solid #fff;box-sizing:border-box"></div>

<!-- right scrollbar -->
<div style="left:1309px;top:234px;width:14px;height:524px;background:#88a7d2"></div>
<div style="left:1310px;top:234px;width:12px;height:7px;background:#eaf2fb;border:1px solid #8aa6c8;box-sizing:border-box"></div>
<svg style="left:1310px;top:245px" width="12" height="7"><path d="M1 6l5-5 5 5z" fill="#3f5c86"/></svg>
<div style="left:1310px;top:259px;width:13px;height:421px;box-sizing:border-box;border:1px solid #5f7da6;border-radius:3px;background:linear-gradient(90deg,#e9eff7,#c6d3e4 60%,#aab9cf)"></div>
<div style="left:1313px;top:466px;width:7px;height:6px;background:repeating-linear-gradient(#8a99ad 0 1px,transparent 1px 2px)"></div>
<svg style="left:1310px;top:746px" width="12" height="7"><path d="M1 1l5 5 5-5z" fill="#3f5c86"/></svg>

<!-- sheet tabs / hscroll -->
<div style="left:139px;top:758px;width:1184px;height:15px;background:#9db7dc"></div>
<div style="left:141px;top:757px;width:62px;height:16px;background:linear-gradient(#dbe8f9,#bcd4f2);border:1px solid #8fabd0;box-sizing:border-box"></div>
<svg style="left:145px;top:760px" width="56" height="9"><path d="M1 0v8M7 0L3 4l4 4zM21 0l-4 4 4 4zM33 0l4 4-4 4zM47 0l4 4-4 4zM53 0v8" fill="#2a5795" stroke="#2a5795"/></svg>
<svg style="left:203px;top:757px" width="70" height="17"><path d="M1 16l0-15h24l16 0-11 15z" fill="#e7eff9" stroke="#8fabd0"/><path d="M26 16L37 1h34l-12 15z" fill="#d8e5f6" stroke="#8fabd0"/></svg>
<div class="t" style="left:212px;top:759px;color:#1f4a8a;font-size:12px">1</div>
<svg style="left:236px;top:758px" width="17" height="14"><rect x="4" y="4" width="11" height="9" fill="#f2f6fc" stroke="#889bb6"/><circle cx="5" cy="4" r="3" fill="#f1a21e"/></svg>
<div style="left:842px;top:758px;width:6px;height:15px;background:#fff;border:1px solid #8fabd0;box-sizing:border-box"></div>
<div style="left:848px;top:758px;width:475px;height:15px;background:#7f9dc8"></div>
<svg style="left:854px;top:761px" width="6" height="10"><path d="M5 0L0 5l5 5z" fill="#3f5c86"/></svg>
<div style="left:867px;top:759px;width:365px;height:14px;box-sizing:border-box;border:1px solid #5f7da6;border-radius:2px;background:linear-gradient(#e9eff7,#c6d3e4 60%,#a5b5cc)"></div>
<div style="left:1046px;top:763px;width:7px;height:6px;background:repeating-linear-gradient(90deg,#8a99ad 0 1px,transparent 1px 2px)"></div>
<svg style="left:1290px;top:761px" width="6" height="10"><path d="M0 0l5 5-5 5z" fill="#3f5c86"/></svg>
<div style="left:1300px;top:758px;width:6px;height:15px;background:#fff;border:1px solid #8fabd0;box-sizing:border-box"></div>
<div style="left:1306px;top:758px;width:17px;height:15px;background:#7f9dc8"></div>

<!-- status bar -->
<div style="left:139px;top:773px;width:1184px;height:21px;background:linear-gradient(#cfe1f8,#b4d0f3 45%,#a6c6ef 55%,#d0e2f8)"></div>
<div style="left:139px;top:773px;width:1184px;height:1px;background:#5d7fa9"></div>
<div style="left:179px;top:775px;width:1px;height:19px;background:#e2ecf9"></div>
<div class="t" style="left:147px;top:777px;color:#24406e">就绪</div>
<div style="left:1060px;top:774px;width:263px;height:20px;background:linear-gradient(#9dbce4,#86a8d8)"></div>
<div style="left:1064px;top:775px;width:56px;height:18px;background:#b6c7df;border:1px solid #9eb6d6;box-sizing:border-box"></div>
<div style="left:1065px;top:776px;width:18px;height:16px;background:linear-gradient(#fde0a1,#f8c86c)"></div>
<svg style="left:1066px;top:778px" width="52" height="12"><path d="M1.500 1.500h12v9h-12zM1.500 4.500h12M1.500 7.500h12M5.500 1.500v9M9.500 1.500v9" fill="#fff" stroke="#555"/><path d="M22.500 .500h11v11h-11zM25 4h6M25 6h6M25 8h6" fill="#ddd" stroke="#666"/><path d="M41 1h11v10H41zM46.500 1v7" fill="#ddd" stroke="#666"/></svg>
<div class="t" style="left:1129px;top:777px;color:#16356a;font-size:12.500px">100%</div>
<div style="left:1186px;top:783px;width:102px;height:1px;background:#e2ecf9"></div>
<svg style="left:1170px;top:776px" width="17" height="17"><circle cx="8.500" cy="8.500" r="7.500" fill="#d3e0f2" stroke="#5d7594" stroke-width="1.200"/><path d="M4 8.500h9" stroke="#333" stroke-width="2"/></svg>
<svg style="left:1288px;top:776px" width="17" height="17"><circle cx="8.500" cy="8.500" r="7.500" fill="#d3e0f2" stroke="#5d7594" stroke-width="1.200"/><path d="M4 8.500h9M8.500 4v9" stroke="#333" stroke-width="2"/></svg>
<svg style="left:1232px;top:777px" width="9" height="14"><path d="M.5.500h8v8l-4 5-4-5z" fill="#eaf1fb" stroke="#55708f"/></svg>
<svg style="left:1314px;top:784px" width="9" height="9"><path d="M6 1h2v2H6zM3 4h2v2H3zM6 4h2v2H6zM0 7h2v2H0zM3 7h2v2H3zM6 7h2v2H6z" fill="#3f5c86"/></svg>

</body></html>
